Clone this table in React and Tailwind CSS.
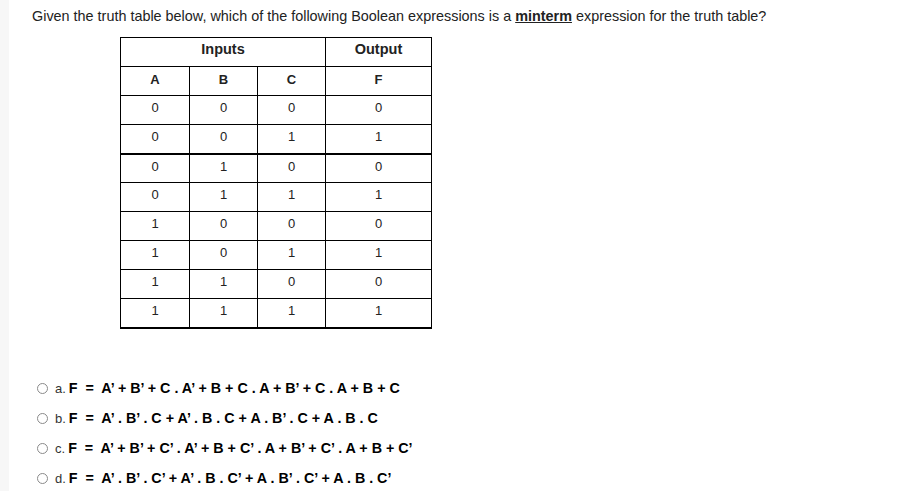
const rows = [
  ['0', '0', '0', '0'],
  ['0', '0', '1', '1'],
  ['0', '1', '0', '0'],
  ['0', '1', '1', '1'],
  ['1', '0', '0', '0'],
  ['1', '0', '1', '1'],
  ['1', '1', '0', '0'],
  ['1', '1', '1', '1'],
];

const options = [
  { key: 'a.', expr: 'A’ + B’ + C . A’ + B + C . A + B’ + C . A + B + C' },
  { key: 'b.', expr: 'A’ . B’ . C + A’ . B . C + A . B’ . C + A . B . C' },
  { key: 'c.', expr: 'A’ + B’ + C’ . A’ + B + C’ . A + B’ + C’ . A + B + C’' },
  { key: 'd.', expr: 'A’ . B’ . C’ + A’ . B . C’ + A . B’ . C’ + A . B . C’' },
];

function Option({ opt }) {
  return (
    <label className="flex h-[30px] items-center">
      <span className="ml-[27px] h-[11px] w-[11px] rounded-full border border-[#8a8a8a] bg-white" />
      <span className="ml-[7px] text-[13px] text-[#333]">{opt.key}</span>
      <span className="ml-[3px] whitespace-pre text-[14.3px] font-bold text-black">
        {'F  =  ' + opt.expr}
      </span>
    </label>
  );
}

export default function App() {
  return (
    <div
      className="flex h-[491px] w-[905px] bg-white text-[#222]"
      style={{ fontFamily: '"Liberation Sans", Arial, sans-serif' }}
    >
      <div className="w-[9px] bg-[#f7f7f7]" />
      <div className="flex-1">
        <p className="ml-[23px] mt-[8px] text-[14.4px] leading-[17px] text-[#222]">
          Given the truth table below, which of the following Boolean expressions is a{' '}
          <b className="underline">minterm</b> expression for the truth table?
        </p>

        <table className="ml-[111px] mt-[12px] border-collapse text-[13px] text-[#222]">
          <colgroup>
            <col className="w-[69px]" />
            <col className="w-[68px]" />
            <col className="w-[68px]" />
            <col className="w-[106px]" />
          </colgroup>
          <tbody>
            <tr className="h-[29px]">
              <td colSpan={3} className="border border-black pt-[1px] text-center align-top text-[14.5px] font-bold">
                Inputs
              </td>
              <td className="border border-black pt-[1px] text-center align-top text-[14.5px] font-bold">Output</td>
            </tr>
            <tr className="h-[29px]">
              {['A', 'B', 'C', 'F'].map((h) => (
                <td key={h} className="border border-black pt-[3px] text-center align-top text-[13px] font-bold">
                  {h}
                </td>
              ))}
            </tr>
            {rows.map((r, i) => (
              <tr
                key={i}
                className={`h-[29px] ${i === 1 || i === 7 ? 'border-b-2 border-black' : ''}`}
              >
                {r.map((v, j) => (
                  <td key={j} className={`border border-black pt-[2px] text-center align-top ${i === 1 || i === 7 ? 'border-b-2' : ''}`}>
                    {v}
                  </td>
                ))}
              </tr>
            ))}
          </tbody>
        </table>

        <div className="mt-[45px] ml-[1px]">
          {options.map((o) => (
            <Option key={o.key} opt={o} />
          ))}
        </div>
      </div>
    </div>
  );
}
